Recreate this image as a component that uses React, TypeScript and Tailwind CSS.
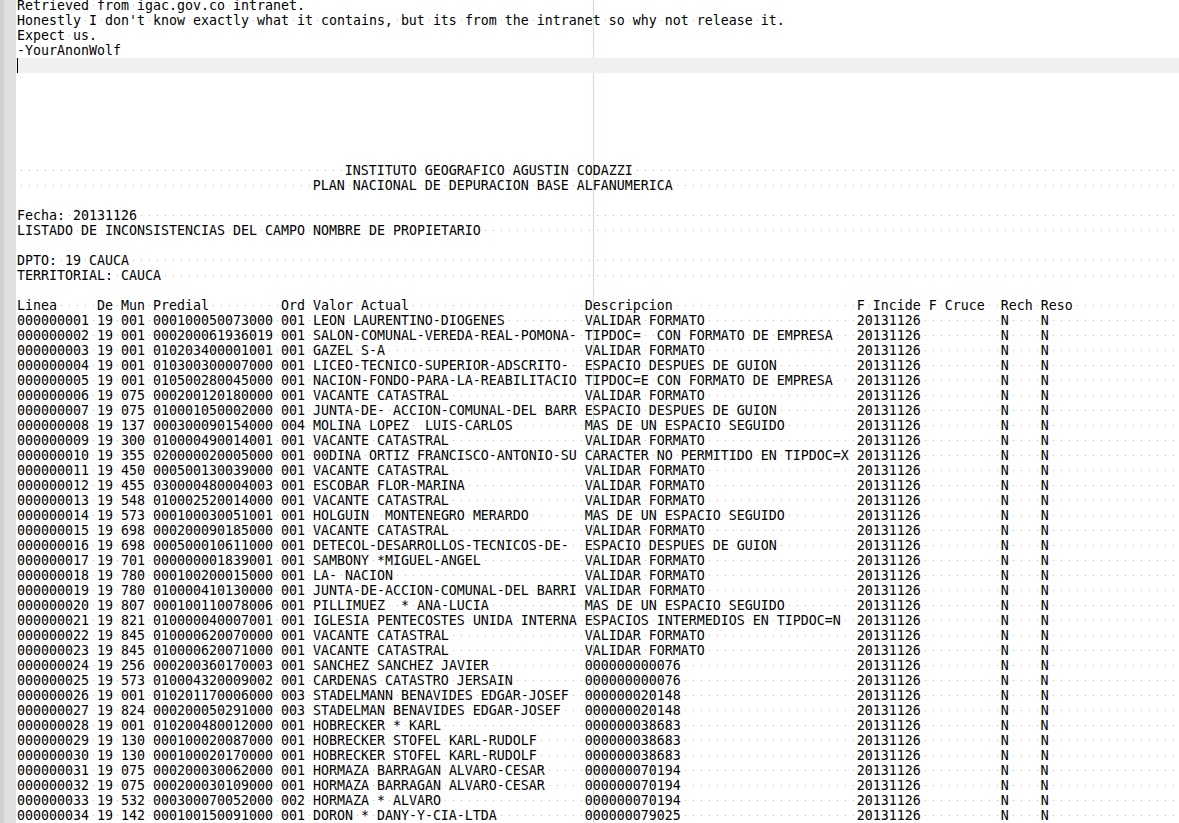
const rowData: string[][] = [
  ["19", "001", "000100050073000", "001", "LEON LAURENTINO-DIOGENES", "VALIDAR FORMATO"],
  ["19", "001", "000200061936019", "001", "SALON-COMUNAL-VEREDA-REAL-POMONA-", "TIPDOC=  CON FORMATO DE EMPRESA"],
  ["19", "001", "010203400001001", "001", "GAZEL S-A", "VALIDAR FORMATO"],
  ["19", "001", "010300300007000", "001", "LICEO-TECNICO-SUPERIOR-ADSCRITO-", "ESPACIO DESPUES DE GUION"],
  ["19", "001", "010500280045000", "001", "NACION-FONDO-PARA-LA-REABILITACIO", "TIPDOC=E CON FORMATO DE EMPRESA"],
  ["19", "075", "000200120180000", "001", "VACANTE CATASTRAL", "VALIDAR FORMATO"],
  ["19", "075", "010001050002000", "001", "JUNTA-DE- ACCION-COMUNAL-DEL BARR", "ESPACIO DESPUES DE GUION"],
  ["19", "137", "000300090154000", "004", "MOLINA LOPEZ  LUIS-CARLOS", "MAS DE UN ESPACIO SEGUIDO"],
  ["19", "300", "010000490014001", "001", "VACANTE CATASTRAL", "VALIDAR FORMATO"],
  ["19", "355", "020000020005000", "001", "00DINA ORTIZ FRANCISCO-ANTONIO-SU", "CARACTER NO PERMITIDO EN TIPDOC=X"],
  ["19", "450", "000500130039000", "001", "VACANTE CATASTRAL", "VALIDAR FORMATO"],
  ["19", "455", "030000480004003", "001", "ESCOBAR FLOR-MARINA", "VALIDAR FORMATO"],
  ["19", "548", "010002520014000", "001", "VACANTE CATASTRAL", "VALIDAR FORMATO"],
  ["19", "573", "000100030051001", "001", "HOLGUIN  MONTENEGRO MERARDO", "MAS DE UN ESPACIO SEGUIDO"],
  ["19", "698", "000200090185000", "001", "VACANTE CATASTRAL", "VALIDAR FORMATO"],
  ["19", "698", "000500010611000", "001", "DETECOL-DESARROLLOS-TECNICOS-DE-", "ESPACIO DESPUES DE GUION"],
  ["19", "701", "000000001839001", "001", "SAMBONY *MIGUEL-ANGEL", "VALIDAR FORMATO"],
  ["19", "780", "000100200015000", "001", "LA- NACION", "VALIDAR FORMATO"],
  ["19", "780", "010000410130000", "001", "JUNTA-DE-ACCION-COMUNAL-DEL BARRI", "VALIDAR FORMATO"],
  ["19", "807", "000100110078006", "001", "PILLIMUEZ  * ANA-LUCIA", "MAS DE UN ESPACIO SEGUIDO"],
  ["19", "821", "010000040007001", "001", "IGLESIA PENTECOSTES UNIDA INTERNA", "ESPACIOS INTERMEDIOS EN TIPDOC=N"],
  ["19", "845", "010000620070000", "001", "VACANTE CATASTRAL", "VALIDAR FORMATO"],
  ["19", "845", "010000620071000", "001", "VACANTE CATASTRAL", "VALIDAR FORMATO"],
  ["19", "256", "000200360170003", "001", "SANCHEZ SANCHEZ JAVIER", "000000000076"],
  ["19", "573", "010004320009002", "001", "CARDENAS CATASTRO JERSAIN", "000000000076"],
  ["19", "001", "010201170006000", "003", "STADELMANN BENAVIDES EDGAR-JOSEF", "000000020148"],
  ["19", "824", "000200050291000", "003", "STADELMAN BENAVIDES EDGAR-JOSEF", "000000020148"],
  ["19", "001", "010200480012000", "001", "HOBRECKER * KARL", "000000038683"],
  ["19", "130", "000100020087000", "001", "HOBRECKER STOFEL KARL-RUDOLF", "000000038683"],
  ["19", "130", "000100020170000", "001", "HOBRECKER STOFEL KARL-RUDOLF", "000000038683"],
  ["19", "075", "000200030062000", "001", "HORMAZA BARRAGAN ALVARO-CESAR", "000000070194"],
  ["19", "075", "000200030109000", "001", "HORMAZA BARRAGAN ALVARO-CESAR", "000000070194"],
  ["19", "532", "000300070052000", "002", "HORMAZA * ALVARO", "000000070194"],
  ["19", "142", "000100150091000", "001", "DORON * DANY-Y-CIA-LTDA", "000000079025"],
];

const WIDTH = 145;

const tableRows = rowData.map(([de, mun, predial, ord, valor, desc], i) =>
  (
    String(i + 1).padStart(9, "0") +
    ` ${de} ${mun} ${predial} ${ord} ` +
    valor.padEnd(34) +
    desc.padEnd(34) +
    "20131126".padEnd(18) +
    "N    N"
  ).padEnd(WIDTH),
);

const header = (
  "Linea".padEnd(10) +
  "De Mun Predial".padEnd(23) +
  "Ord Valor Actual".padEnd(38) +
  "Descripcion".padEnd(34) +
  "F Incide F Cruce  Rech Reso"
).padEnd(WIDTH);

const lines: string[] = [
  "Retrieved from igac.gov.co intranet.",
  "Honestly I don't know exactly what it contains, but its from the intranet so why not release it.",
  "Expect us.",
  "-YourAnonWolf",
  "",
  "",
  "",
  "",
  "",
  "",
  "",
  "                                         INSTITUTO GEOGRAFICO AGUSTIN CODAZZI".padEnd(WIDTH),
  "                                     PLAN NACIONAL DE DEPURACION BASE ALFANUMERICA".padEnd(WIDTH),
  "",
  "Fecha: 20131126".padEnd(WIDTH),
  "LISTADO DE INCONSISTENCIAS DEL CAMPO NOMBRE DE PROPIETARIO".padEnd(WIDTH),
  "",
  "DPTO: 19 CAUCA".padEnd(WIDTH),
  "TERRITORIAL: CAUCA".padEnd(WIDTH),
  "",
  header,
  ...tableRows,
];

function Line({ text, current }: { text: string; current: boolean }) {
  const parts = text.split(/( +)/).filter(Boolean);
  return (
    <div className={`relative h-[15px] pl-px ${current ? "bg-[#f0f0f0]" : ""}`}>
      {current && <span className="absolute left-px top-0 h-[15px] w-px bg-black" />}
      {parts.map((part, i) =>
        part.startsWith(" ") ? (
          <span
            key={i}
            className="inline-block h-[15px] align-top bg-[radial-gradient(circle_at_4.5px_7.5px,#bbbbbb_0.55px,transparent_0.7px)] bg-[length:8px_15px]"
          >
            {part}
          </span>
        ) : (
          <span key={i} className="inline-block h-[15px] align-top">
            {part}
          </span>
        ),
      )}
    </div>
  );
}

export default function App() {
  return (
    <div className="flex h-[823px] overflow-hidden bg-white">
      <div className="w-1 shrink-0 bg-[#d0d0d0]" />
      <div className="w-3 shrink-0 bg-[#e0e0e0]" />
      <main className="relative min-w-0 flex-1 overflow-hidden">
        <div className="absolute bottom-0 left-[577px] top-0 w-px bg-[#c8e2c8]" />
        <div className="relative -mt-[2px] whitespace-pre font-['DejaVu_Sans_Mono',monospace] text-[13.295px] leading-[15px] text-black">
          {lines.map((line, i) => (
            <Line key={i} text={line} current={i === 4} />
          ))}
        </div>
      </main>
    </div>
  );
}
